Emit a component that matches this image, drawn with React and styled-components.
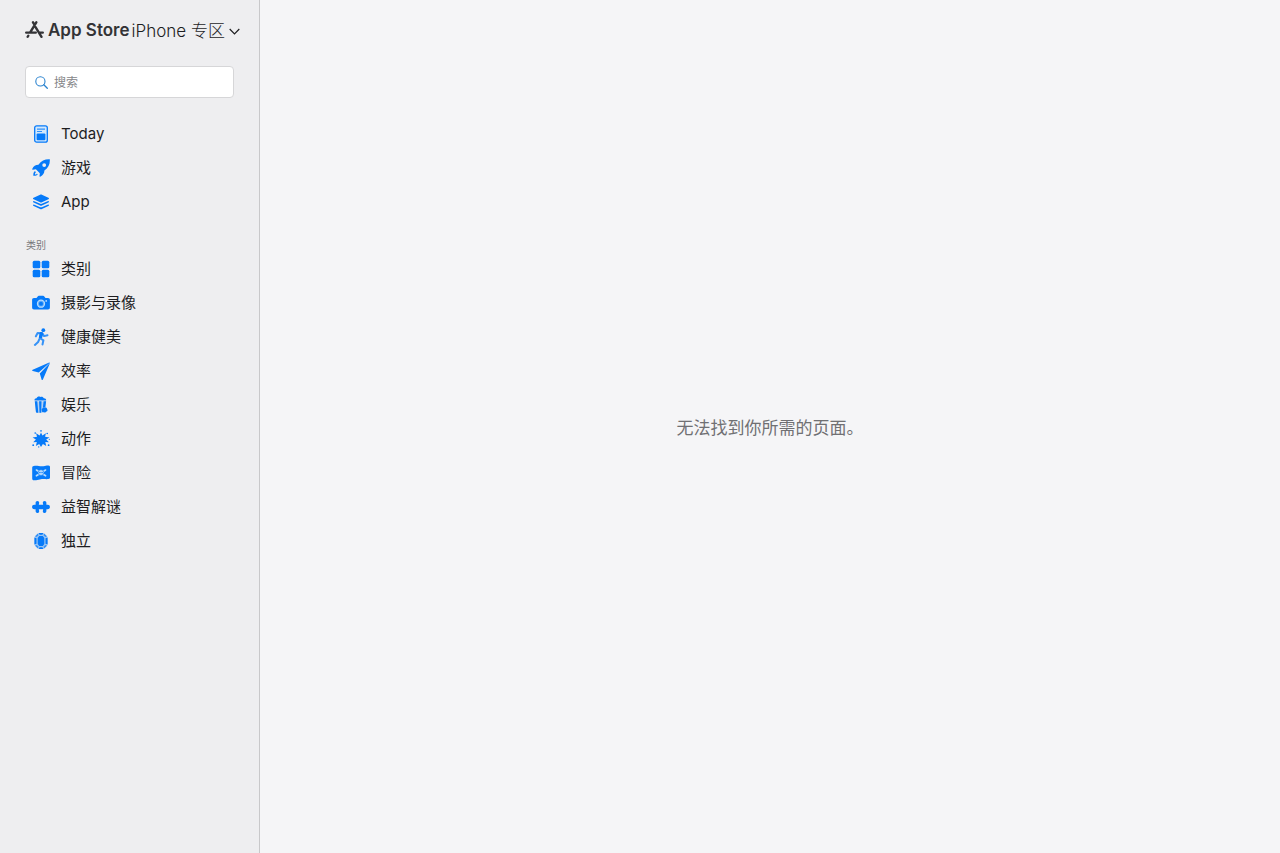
import React from 'react';
import styled, { createGlobalStyle } from 'styled-components';

const GlobalStyle = createGlobalStyle`
  * {
    box-sizing: border-box;
  }

  body {
    margin: 0;
    background-color: #f5f5f7;
    color: #1d1d1f;
    font-family: Inter, 'Noto Sans CJK SC', sans-serif;
  }
`;

const Layout = styled.div`
  display: flex;
  min-height: 100vh;

  @media (max-width: 600px) {
    flex-direction: column;
  }
`;

const Sidebar = styled.nav`
  flex: 0 0 260px;
  min-width: 0;
  padding: 16px 16px 24px 25px;
  background-color: #eeeef0;
  border-right: solid 1px #c8c8ca;
`;

const Header = styled.header`
  display: flex;
  align-items: center;
  gap: 2px;
  height: 28px;
  white-space: nowrap;
`;

const Brand = styled.a`
  display: flex;
  align-items: center;
  gap: 4px;
  color: #333336;
  font-size: 17px;
  font-weight: 600;
  line-height: 20px;
  text-decoration: none;
`;

const PlatformButton = styled.button`
  display: flex;
  align-items: center;
  gap: 4px;
  padding: 2px 0 0;
  border: none;
  background: none;
  color: #1d1d1f;
  font-family: inherit;
  font-size: 17px;
  font-weight: 300;
  line-height: 26px;
  cursor: pointer;
`;

const SearchForm = styled.form`
  display: flex;
  align-items: center;
  gap: 6px;
  height: 32px;
  margin: 22px 9px 19px 0;
  padding: 0 9px;
  border: solid 1px #d6d6d8;
  border-radius: 4px;
  background-color: #ffffff;

  svg {
    flex: none;
  }
`;

const SearchInput = styled.input`
  width: 100%;
  min-width: 0;
  padding: 0;
  border: none;
  outline: none;
  background: none;
  color: #1d1d1f;
  font-family: inherit;
  font-size: 12px;

  &::placeholder {
    color: #868689;
  }
`;

const SectionTitle = styled.h2`
  margin: 20px 0 0 1px;
  color: #77777a;
  font-size: 10px;
  font-weight: 400;
  line-height: 13px;
`;

const NavList = styled.ul`
  margin: 0;
  padding: 0;
  list-style: none;
`;

const NavLink = styled.a`
  display: flex;
  align-items: center;
  gap: 11px;
  height: 34px;
  padding-left: 7px;
  color: #1d1d1f;
  font-size: 15px;
  line-height: 18px;
  text-decoration: none;
`;

const NavIcon = styled.svg`
  flex: none;
  width: 18px;
  height: 18px;
  fill: #067af9;
`;

const Content = styled.main`
  display: flex;
  flex: 1;
  align-items: center;
  justify-content: center;
  padding: 26px 24px 24px;
`;

const Message = styled.p`
  margin: 0;
  color: #707073;
  font-size: 17px;
  line-height: 24px;
`;

const icons = {
  today: (
    <>
      <rect x="2.7" y="0.8" width="12.6" height="16.4" rx="2" fill="#d3e8fc" stroke="#067af9" strokeWidth="1.3" />
      <path d="M5 3.5h8v1.2H5zM5 5.9h5v1H5z" opacity=".8" />
      <rect x="4.6" y="8.5" width="8.8" height="6.8" rx="1" />
    </>
  ),
  games: (
    <>
      <path
        fillRule="evenodd"
        d="M17.8.3c.3 4.7-1.3 8.3-5.4 11.2-.1 2.8-1.3 4.7-4.2 6.2-.5.2-.8-.1-.7-.6l.3-2.9-3.9-3.9-3.1.4c-.5 0-.8-.3-.6-.8 1.4-2.7 3.4-4 6.2-4.1C9.4 1.8 13.1 0 17.8.3ZM12.2 4.2a1.9 1.9 0 1 0 0 3.8 1.9 1.9 0 0 0 0-3.8Z"
      />
      <path d="M3.1 12.1c-1.5.6-1.8 2.3-1.8 4.6 2.1.1 4-.3 4.6-1.8l-1.2-.2c-.3.7-.9.9-1.7.9 0-.9.1-1.6.9-2Z" />
    </>
  ),
  apps: (
    <>
      <path d="M8.1 1.7 1.6 4.8c-.8.4-.8 1.1 0 1.5l6.5 2.9c.6.3 1.2.3 1.8 0l6.5-2.9c.8-.4.8-1.1 0-1.5L9.9 1.7c-.6-.3-1.2-.3-1.8 0Z" />
      <path d="m1.8 8-.3.1c-.7.5-.6 1.1.2 1.5l6.4 2.9c.6.3 1.2.3 1.8 0l6.4-2.9c.8-.4.9-1 .2-1.5l-.3-.1-5.9 2.6c-.9.4-1.7.4-2.6 0Z" />
      <path d="m1.8 11.4-.3.1c-.7.5-.6 1.1.2 1.5l6.4 2.9c.6.3 1.2.3 1.8 0l6.4-2.9c.8-.4.9-1 .2-1.5l-.3-.1-5.9 2.6c-.9.4-1.7.4-2.6 0Z" />
    </>
  ),
  categories: (
    <>
      <rect x="0.7" y="0.7" width="7.6" height="7.6" rx="1.5" />
      <rect x="9.7" y="0.7" width="7.6" height="7.6" rx="1.5" />
      <rect x="0.7" y="9.7" width="7.6" height="7.6" rx="1.5" />
      <rect x="9.7" y="9.7" width="7.6" height="7.6" rx="1.5" />
    </>
  ),
  camera: (
    <>
      <path d="M2 4h2.5l1.2-1.6c.3-.4.7-.6 1.2-.6h4.2c.5 0 .9.2 1.2.6L13.5 4H16c1.2 0 1.9.7 1.9 1.9v7.7c0 1.2-.7 1.9-1.9 1.9H2c-1.2 0-1.9-.7-1.9-1.9V5.9C.1 4.7.8 4 2 4Z" />
      <circle cx="9" cy="9.7" r="3.5" fill="#5aaafb" stroke="#b9dcfd" strokeWidth="1.3" />
      <circle cx="9" cy="9.7" r="2" />
      <circle cx="14.2" cy="6.9" r="0.9" fill="#b9dcfd" />
    </>
  ),
  running: (
    <>
      <circle cx="11.3" cy="2.2" r="1.9" />
      <path
        d="M9.2 5.2 7.8 10l3.6 2.3-.9 4.2M7.5 10.8 6.1 14l-3.2 2.9M8.8 5.2 5.6 5 3.9 8.3M10.3 5.3l1.8 2.8 3.4-.9"
        fill="none"
        stroke="#067af9"
        strokeWidth="2"
        strokeLinecap="round"
        strokeLinejoin="round"
        opacity=".8"
      />
      <path d="M7.8 4.5c1.5-.8 3.3-.3 3.4 1.2L10 10.3l-3.2-.5Z" />
    </>
  ),
  plane: (
    <>
      <path d="M17.2.6.7 7.8c-.8.4-.7 1.1.1 1.3l5.9 1.5L17.8.8a.5.5 0 0 0-.6-.2Z" />
      <path d="m17.8.9-10 10.6 1.8 5.9c.2.8 1 .9 1.3.1l7-16.2c.1-.2.1-.3-.1-.4Z" />
    </>
  ),
  popcorn: (
    <>
      <path d="M2.6 4.4C2.2 3.2 3.2 2 4.6 2.2 5 .7 7.2-.1 8.3 1c1.3-.8 3.1-.1 3.5 1.2 1.4-.2 2.7 1 2.3 2.2Z" />
      <path d="M2.8 5.3h11.3l-1.3 11.4H4.1Z" opacity=".25" />
      <path d="M2.8 5.3h2.5l1 11.4H4.9c-.6 0-.9-.3-1-.9ZM7.1 5.3h2.4l-.3 11.4H7.5ZM11.6 5.3h2.5l-.8 6.1h-2.4Z" />
      <path d="M10.4 12.5c.3-1.1 1.5-1.4 2.3-.7 1-.6 2.4.1 2.3 1.2 1 .8.6 2.3-.6 2.5-.4 1.1-1.8 1.4-2.6.6-1.2.3-2.3-.6-2-1.7-.5-.7-.1-1.7.6-1.9Z" />
    </>
  ),
  action: (
    <>
      <path d="m9 2.6 1.4 2.9 3.5-2.2-.8 3.5 4.4.6-3.3 2.1 2.7 2.7-3.6-.2.9 3.9-3.3-1.8L9 16.9l-1.8-2.8-3.3 1.8.9-3.9-3.6.2 2.7-2.7L.6 7.4 5 6.8l-.9-3.5 3.5 2.2Z" />
      <circle cx="9" cy="0.9" r="0.8" />
      <circle cx="3.2" cy="3.1" r="0.8" />
      <circle cx="15.2" cy="3.5" r="0.8" />
      <circle cx="17.3" cy="9.3" r="0.6" />
      <circle cx="1.2" cy="15.2" r="0.9" />
      <circle cx="16.6" cy="15.2" r="0.9" />
      <circle cx="6.7" cy="16.9" r="0.7" />
    </>
  ),
  adventure: (
    <>
      <path d="M.2 3.7c0-1 .5-1.5 1.5-1.7 4-.8 5.8.8 9.8.2 2-.2 3.1-.8 5-.7 1 .1 1.5.6 1.5 1.6v10.5c0 1-.5 1.4-1.5 1.5-3.4.2-5.2-.3-8.6.3-2.2.4-3.7 1-6 .8-1.2-.1-1.7-.7-1.7-1.8Z" />
      <path d="m4.4 6 9.2 5.8M13.6 6l-9.2 5.8" stroke="#b9dcfd" strokeWidth="1.6" strokeLinecap="round" />
      <circle cx="9" cy="8.6" r="2.9" fill="#b9dcfd" stroke="#067af9" strokeWidth="0.6" />
      <circle cx="7.9" cy="8.5" r="0.7" />
      <circle cx="10.1" cy="8.5" r="0.7" />
    </>
  ),
  puzzle: (
    <path d="M3.6 6.8V4.9c0-1.2.8-1.9 1.8-1.9s1.8.7 1.8 1.8c0 .7-.4 1.1-.4 1.6 0 .3.2.4.6.4h3.2c.4 0 .6-.1.6-.4 0-.5-.4-.9-.4-1.6 0-1.1.8-1.8 1.8-1.8s1.8.7 1.8 1.9v1.9h1.4c1.3 0 2.1.9 2.1 2.2s-.8 2.2-2.1 2.2h-1.4v1.9c0 1.2-.8 1.9-1.8 1.9s-1.8-.7-1.8-1.8c0-.7.4-1.1.4-1.6 0-.3-.2-.4-.6-.4H7.4c-.4 0-.6.1-.6.4 0 .5.4.9.4 1.6 0 1.1-.8 1.8-1.8 1.8s-1.8-.7-1.8-1.9v-1.9H2.2C.9 11.2.1 10.3.1 9s.8-2.2 2.1-2.2Z" />
  ),
  gem: (
    <>
      <path d="M6.6.9h4.8l4 3.8v8.6l-4 3.8H6.6l-4-3.8V4.7Z" opacity=".35" />
      <path d="M7.2 4h3.6l1.5 1.9v6.2L10.8 14H7.2l-1.5-1.9V5.9Z" />
      <path d="M2.4 5.4 4.5 6.3v5.4l-2.1.9ZM15.6 5.4l-2.1.9v5.4l2.1.9ZM6.7.9h4.6l-.9 1.8H7.6ZM6.7 17.1h4.6l-.9-1.8H7.6Z" />
      <path d="m3 4.2 2.8-2.7.7 1.7-1.9 1.9ZM15 4.2l-2.8-2.7-.7 1.7 1.9 1.9ZM3 13.8l2.8 2.7.7-1.7-1.9-1.9ZM15 13.8l-2.8 2.7-.7-1.7 1.9-1.9Z" opacity=".7" />
    </>
  ),
};

const mainItems = [
  { icon: 'today', label: 'Today' },
  { icon: 'games', label: '游戏' },
  { icon: 'apps', label: 'App' },
];

const categoryItems = [
  { icon: 'categories', label: '类别' },
  { icon: 'camera', label: '摄影与录像' },
  { icon: 'running', label: '健康健美' },
  { icon: 'plane', label: '效率' },
  { icon: 'popcorn', label: '娱乐' },
  { icon: 'action', label: '动作' },
  { icon: 'adventure', label: '冒险' },
  { icon: 'puzzle', label: '益智解谜' },
  { icon: 'gem', label: '独立' },
];

function Navigation({ items }) {
  return (
    <NavList>
      {items.map((item) => (
        <li key={item.icon}>
          <NavLink href="#">
            <NavIcon viewBox="0 0 18 18" aria-hidden="true">
              {icons[item.icon]}
            </NavIcon>
            {item.label}
          </NavLink>
        </li>
      ))}
    </NavList>
  );
}

function StoreLogo() {
  return (
    <svg width="19" height="18" viewBox="0 0 19 18" aria-hidden="true">
      <path
        d="M11.3 1.3 5.2 11.4M8 1.3l1.3 2.2M1.2 11.6h9.6M14.6 11.6h3.2M10.4 5.9l6.1 9.9M3.3 14.7l-.6 1.1"
        fill="none"
        stroke="#333336"
        strokeWidth="2.4"
        strokeLinecap="round"
      />
    </svg>
  );
}

function App() {
  return (
    <>
      <GlobalStyle />
      <Layout>
        <Sidebar>
          <Header>
            <Brand href="#">
              <StoreLogo />
              App Store
            </Brand>
            <PlatformButton type="button">
              iPhone 专区
              <svg width="11" height="7" viewBox="0 0 11 7" aria-hidden="true">
                <path d="m.7 1 4.8 4.8L10.3 1" fill="none" stroke="#1d1d1f" strokeWidth="1.2" />
              </svg>
            </PlatformButton>
          </Header>
          <SearchForm role="search">
            <svg width="13" height="13" viewBox="0 0 13 13" aria-hidden="true">
              <circle cx="5.4" cy="5.4" r="4.6" fill="none" stroke="#2b83cf" strokeWidth="1.1" />
              <path d="m8.8 8.8 3.5 3.5" stroke="#2b83cf" strokeWidth="1.3" strokeLinecap="round" />
            </svg>
            <SearchInput type="search" placeholder="搜索" aria-label="搜索" />
          </SearchForm>
          <Navigation items={mainItems} />
          <SectionTitle>类别</SectionTitle>
          <Navigation items={categoryItems} />
        </Sidebar>
        <Content>
          <Message>无法找到你所需的页面。</Message>
        </Content>
      </Layout>
    </>
  );
}

export default App;
